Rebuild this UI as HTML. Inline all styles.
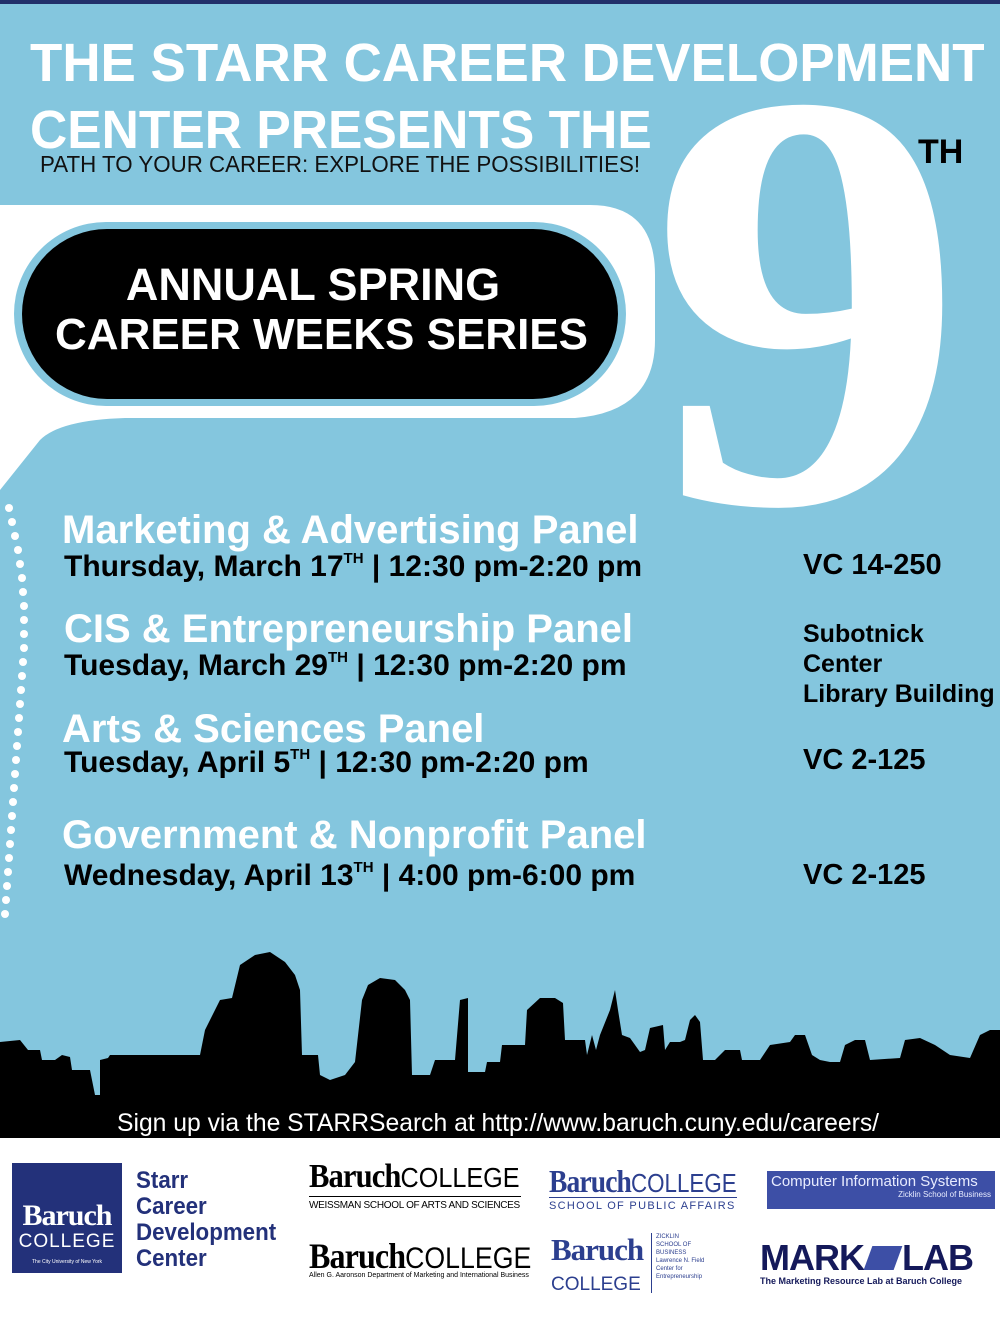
<!DOCTYPE html>
<html><head><meta charset="utf-8"><style>
*{margin:0;padding:0;box-sizing:border-box}
body{width:1000px;height:1319px;overflow:hidden;background:#84c6de;position:relative;font-family:"Liberation Sans",sans-serif}
.a{position:absolute;white-space:nowrap}
.h{font-weight:bold;color:#fff;font-size:54px;line-height:1;transform-origin:left top}
.t{color:#fff;font-weight:bold;font-size:40px;line-height:1}
.d{color:#000;font-weight:bold;font-size:30px;line-height:1}
.d sup{font-size:15px;vertical-align:13px}
.v{color:#000;font-weight:bold;font-size:25px;line-height:30px}
.sx{transform-origin:left top}
</style></head><body>
<div class="a" style="left:0;top:0;width:1000px;height:4px;background:#22306a"></div>
<svg class="a" style="left:0;top:0" width="1000" height="1319">
<path d="M0,205 H590 Q655,205 655,275 V340 Q655,412 575,418 H125 Q60,420 40,440 L0,490 Z" fill="#fff"/>
<rect x="14" y="222" width="612" height="184" rx="92" fill="#84c6de"/>
<rect x="22" y="229" width="596" height="170" rx="85" fill="#000"/>
<g fill="#fff">
<circle cx="9" cy="508" r="4"/><circle cx="12" cy="522" r="4"/><circle cx="15" cy="536" r="4"/><circle cx="18" cy="550" r="4"/><circle cx="20" cy="564" r="4"/><circle cx="22" cy="578" r="4"/><circle cx="23" cy="592" r="4"/><circle cx="24" cy="606" r="4"/><circle cx="24" cy="620" r="4"/><circle cx="24" cy="634" r="4"/><circle cx="24" cy="648" r="4"/><circle cx="23" cy="662" r="4"/><circle cx="22" cy="676" r="4"/><circle cx="21" cy="690" r="4"/><circle cx="20" cy="704" r="4"/><circle cx="19" cy="718" r="4"/><circle cx="18" cy="732" r="4"/><circle cx="17" cy="746" r="4"/><circle cx="16" cy="760" r="4"/><circle cx="15" cy="774" r="4"/><circle cx="14" cy="788" r="4"/><circle cx="13" cy="802" r="4"/><circle cx="12" cy="816" r="4"/><circle cx="11" cy="830" r="4"/><circle cx="10" cy="844" r="4"/><circle cx="9" cy="858" r="4"/><circle cx="8" cy="872" r="4"/><circle cx="7" cy="886" r="4"/><circle cx="6" cy="900" r="4"/><circle cx="5" cy="914" r="4"/>
</g>
<path fill="#000" d="M0,1042 L20,1040 L28,1050 L40,1050 L42,1060 L55,1060 L62,1055 L70,1057 L72,1070 L90,1070 L95,1095 L100,1095 L100,1060 L108,1058 L110,1055 L200,1055 L205,1030 L210,1020 L220,1000 L232,998 L240,965 L255,955 L270,952 L285,962 L295,975 L300,990 L302,1055 L318,1055 L320,1075 L330,1080 L345,1075 L355,1062 L362,1000 L368,985 L380,978 L395,980 L405,990 L410,1000 L412,1075 L430,1075 L435,1060 L455,1060 L460,1000 L468,998 L468,1072 L485,1072 L487,1062 L500,1062 L502,1045 L525,1045 L527,1010 L540,998 L555,998 L563,1003 L565,1040 L585,1040 L587,1055 L592,1035 L596,1050 L600,1035 L610,1010 L615,990 L618,1010 L622,1035 L630,1038 L640,1052 L645,1050 L650,1028 L663,1025 L665,1050 L670,1042 L680,1042 L685,1040 L690,1020 L695,1015 L700,1022 L703,1060 L715,1060 L725,1050 L740,1050 L742,1060 L760,1060 L770,1045 L790,1042 L795,1035 L805,1035 L812,1055 L820,1060 L830,1062 L840,1062 L845,1045 L855,1040 L865,1040 L870,1060 L900,1058 L905,1040 L920,1038 L935,1045 L950,1055 L970,1058 L980,1035 L990,1030 L1000,1030 L1000,1140 L0,1140 Z"/>
<rect x="0" y="1138" width="1000" height="181" fill="#fff"/>
</svg>
<div class="a h" style="left:30px;top:36px;transform:scaleX(0.98)">THE STARR CAREER DEVELOPMENT</div>
<div class="a h" style="left:30px;top:103px;transform:scaleX(0.955)">CENTER PRESENTS THE</div>
<div class="a sx" style="left:40px;top:151px;font-size:23px;color:#111;transform:scaleX(0.97)">PATH TO YOUR CAREER: EXPLORE THE POSSIBILITIES!</div>
<div class="a" style="left:650px;top:0px;font-family:'Liberation Serif',serif;font-weight:bold;color:#fff;font-size:600px;line-height:600px;transform:scaleX(1.05);transform-origin:left top">9</div>
<div class="a" style="left:918px;top:133px;font-weight:bold;font-size:34px;color:#000">TH</div>
<div class="a h" style="left:118px;top:262px;font-size:45px;width:390px;text-align:center">ANNUAL SPRING</div>
<div class="a h" style="left:55px;top:313px;font-size:44px;width:530px;text-align:center">CAREER WEEKS SERIES</div>

<div class="a t" style="left:62px;top:510px">Marketing &amp; Advertising Panel</div>
<div class="a d" style="left:64px;top:551px">Thursday, March 17<sup>TH</sup> | 12:30 pm-2:20 pm</div>
<div class="a t" style="left:64px;top:609px">CIS &amp; Entrepreneurship Panel</div>
<div class="a d" style="left:64px;top:650px">Tuesday, March 29<sup>TH</sup> | 12:30 pm-2:20 pm</div>
<div class="a t" style="left:62px;top:709px">Arts &amp; Sciences Panel</div>
<div class="a d" style="left:64px;top:747px">Tuesday, April 5<sup>TH</sup> | 12:30 pm-2:20 pm</div>
<div class="a t" style="left:62px;top:815px">Government &amp; Nonprofit Panel</div>
<div class="a d" style="left:64px;top:860px">Wednesday, April 13<sup>TH</sup> | 4:00 pm-6:00 pm</div>
<div class="a v" style="left:803px;top:550px;font-size:29px">VC 14-250</div>
<div class="a v" style="left:803px;top:619px">Subotnick<br>Center<br>Library Building</div>
<div class="a v" style="left:803px;top:745px;font-size:29px">VC 2-125</div>
<div class="a v" style="left:803px;top:860px;font-size:29px">VC 2-125</div>

<div class="a" style="left:117px;top:1110px;color:#fff;font-size:24.7px">Sign up via the STARRSearch at http://www.baruch.cuny.edu/careers/</div>

<div class="a" style="left:12px;top:1163px;width:110px;height:110px;background:#23317a;color:#fff;text-align:center">
<div style="font-family:'Liberation Serif',serif;font-weight:bold;font-size:30px;margin-top:36px;letter-spacing:-1px">Baruch</div>
<div style="font-size:19px;line-height:18px;letter-spacing:1px">COLLEGE</div>
<div style="font-size:5px;margin-top:8px">The City University of New York</div></div>
<div class="a" style="left:136px;top:1168px;color:#23317a;font-weight:bold;font-size:24px;line-height:26px;transform:scaleX(0.93);transform-origin:left top">Starr<br>Career<br>Development<br>Center</div>

<div class="a sx" style="left:309px;top:1158px;transform:scaleX(0.9)"><span style="font-family:'Liberation Serif',serif;font-weight:bold;font-size:34px;letter-spacing:-1px">Baruch</span><span style="font-size:28px">COLLEGE</span></div>
<div class="a" style="left:309px;top:1196px;width:212px;border-top:1px solid #000;font-size:10px;padding-top:3px;letter-spacing:-0.3px">WEISSMAN SCHOOL OF ARTS AND SCIENCES</div>
<div class="a sx" style="left:309px;top:1235px;transform:scaleX(0.89)"><span style="font-family:'Liberation Serif',serif;font-weight:bold;font-size:36px;letter-spacing:-1px">Baruch</span><span style="font-size:30px">COLLEGE</span></div>
<div class="a" style="left:309px;top:1272px;font-size:7px">Allen G. Aaronson Department of Marketing and International Business</div>

<div class="a sx" style="left:549px;top:1163px;color:#2c3f8f;transform:scaleX(0.86)"><span style="font-family:'Liberation Serif',serif;font-weight:bold;font-size:32px;letter-spacing:-1px">Baruch</span><span style="font-size:26px">COLLEGE</span></div>
<div class="a" style="left:549px;top:1197px;width:188px;border-top:1px solid #2c3f8f;color:#2c3f8f;font-size:11px;letter-spacing:1.3px;padding-top:2px">SCHOOL OF PUBLIC AFFAIRS</div>
<div class="a" style="left:551px;top:1235px;color:#2c3f8f;font-family:'Liberation Serif',serif;font-weight:bold;font-size:31px;line-height:30px;letter-spacing:-1px">Baruch<br><span style="font-family:'Liberation Sans',sans-serif;font-weight:normal;font-size:19px;letter-spacing:0">COLLEGE</span></div>
<div class="a" style="left:651px;top:1233px;height:60px;border-left:1px solid #2c3f8f;padding-left:4px;color:#2c3f8f;font-size:6px;line-height:8px">ZICKLIN<br>SCHOOL OF<br>BUSINESS<br>Lawrence N. Field<br>Center for<br>Entrepreneurship</div>

<div class="a" style="left:767px;top:1171px;width:228px;height:38px;background:#3d4fa6;color:#e8ecff;font-size:15px;padding:2px 4px">Computer Information Systems<div style="font-size:8px;text-align:right">Zicklin School of Business</div></div>
<div class="a" style="left:760px;top:1237px;color:#14195a;font-weight:bold;font-size:36px;letter-spacing:-1px">MARK<span style="display:inline-block;width:30px;height:24px;background:#3d4fa6;transform:skewX(-20deg);margin:0 4px"></span>LAB</div>
<div class="a" style="left:760px;top:1276px;color:#14195a;font-size:9px;font-weight:bold">The Marketing Resource Lab at Baruch College</div>
</body></html>
